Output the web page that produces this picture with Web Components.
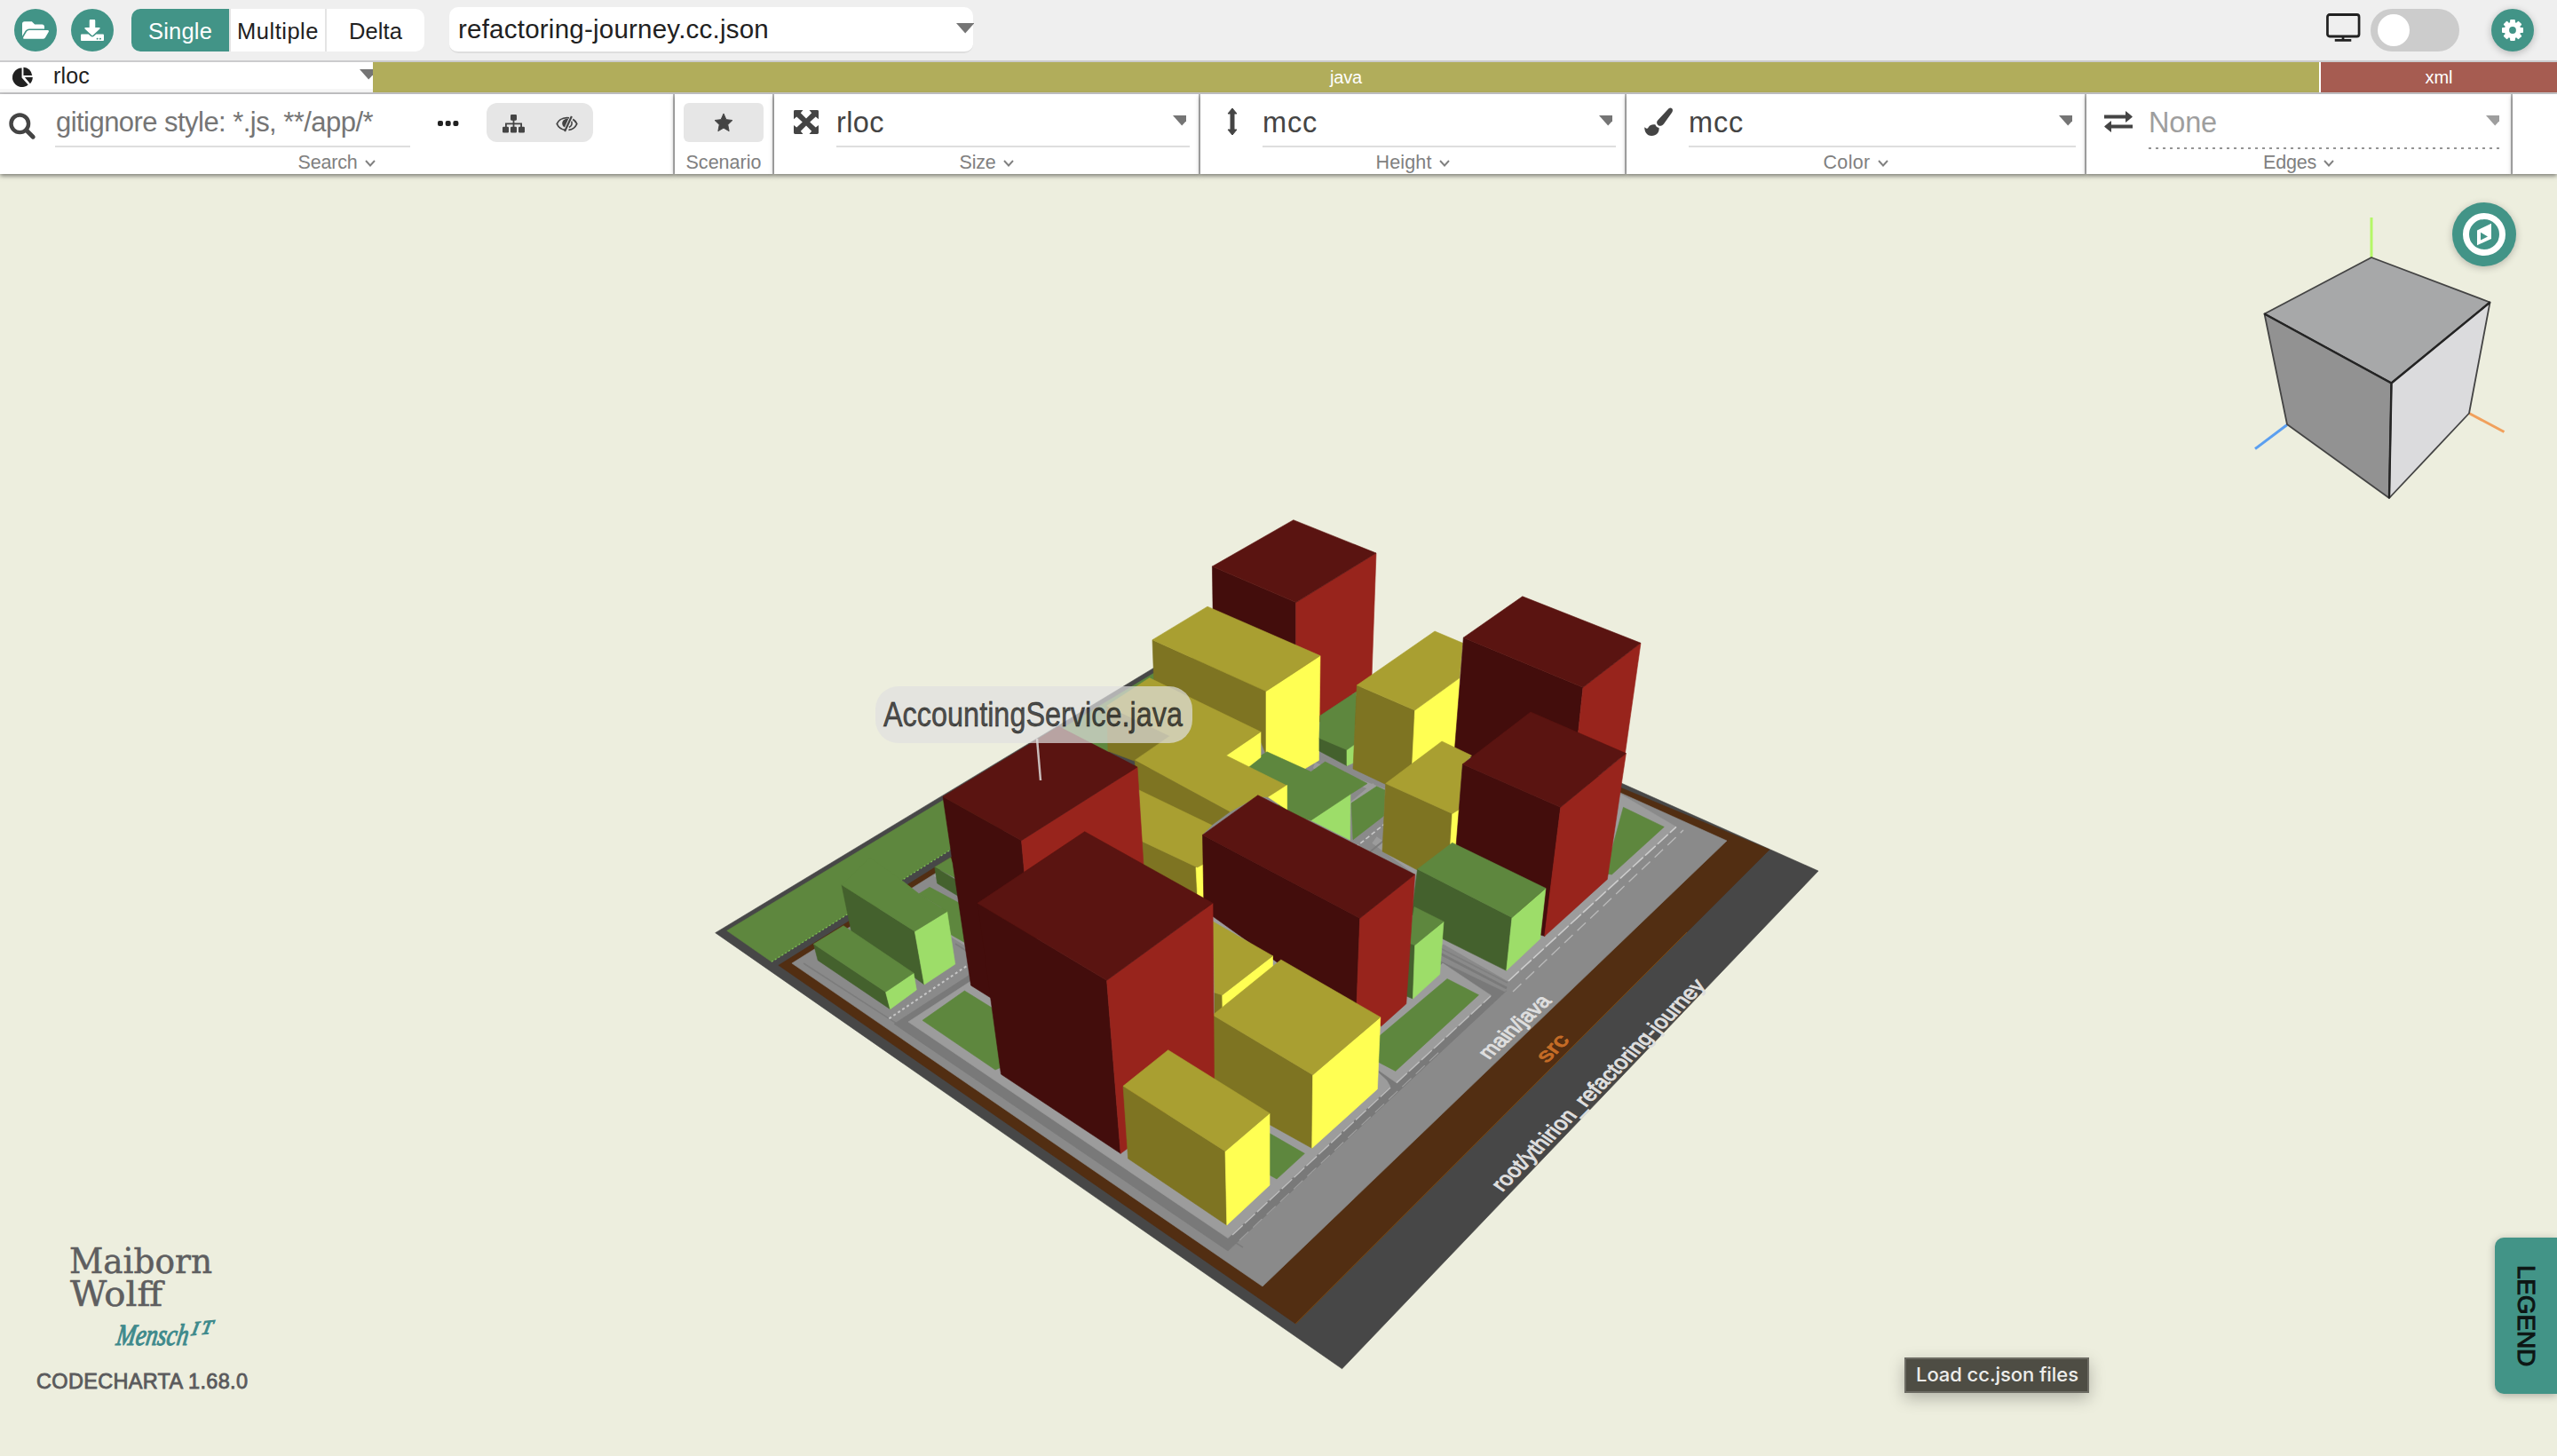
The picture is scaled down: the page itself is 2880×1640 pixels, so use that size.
<!DOCTYPE html>
<html lang="en">
<head>
<meta charset="utf-8">
<title>CodeCharta</title>
<style>
html,body{margin:0;width:2880px;height:1640px;overflow:hidden;background:#edeede;font-family:"Liberation Sans",Arial,sans-serif;color:#212121}
</style>
</head>
<body>
<cc-app></cc-app>
<script>
const define=(name,html,after)=>customElements.define(name,class extends HTMLElement{
  connectedCallback(){
    if(this.shadowRoot)return;
    const root=this.attachShadow({mode:'open'});
    root.innerHTML=typeof html==='function'?html(this):html;
    if(after)after(this,root);
  }
});

/* Text run whose tracking is set so that it spans the given advance width. */
define('cc-label','<style>:host{display:inline-block;white-space:pre}</style><slot></slot>',el=>{
  const w=+el.getAttribute('span');
  if(!w)return;
  el.style.letterSpacing='0px';
  const r=document.createRange();r.selectNodeContents(el);
  el.style.letterSpacing=((w-r.getBoundingClientRect().width)/el.textContent.length).toFixed(3)+'px';
});

const gear=(()=>{let s='';for(let i=0;i<8;i++)s+=`<rect x="-2.9" y="-12" width="5.8" height="7" rx="1" transform="rotate(${i*45})"/>`;
  return `<g transform="translate(12 12)" fill="currentColor">${s}<circle r="6.6" fill="none" stroke="currentColor" stroke-width="5.4"/></g>`})();
const ICONS={
  folder:['0 0 576 512','<path fill="currentColor" d="M572.7 292.1L500.3 416.2A64 64 0 0 1 445 448H45c-18.5 0-30-20.100-20.700-36.100l72.400-124.150A64 64 0 0 1 152 256h400c18.500 0 30 20.100 20.700 36.100zM152 224h328v-48c0-26.500-21.500-48-48-48H272l-64-64H48C21.500 64 0 85.500 0 112v278l69-118.400C86.200 242.200 118 224 152 224z"/>'],
  download:['0 0 512 512','<path fill="currentColor" d="M216 0h80c13.300 0 24 10.700 24 24v168h87.700c17.800 0 26.700 21.500 14.100 34.100L269.700 378.300c-7.500 7.500-19.800 7.500-27.300 0L90.100 226.100c-12.600-12.600-3.700-34.100 14.100-34.100H192V24c0-13.300 10.700-24 24-24zm296 376v112c0 13.300-10.700 24-24 24H24c-13.300 0-24-10.700-24-24V376c0-13.300 10.700-24 24-24h146.700l49 49c20.100 20.100 52.500 20.100 72.600 0l49-49H488c13.300 0 24 10.700 24 24zm-124 88c0-11-9-20-20-20s-20 9-20 20 9 20 20 20 20-9 20-20zm64 0c0-11-9-20-20-20s-20 9-20 20 9 20 20 20 20-9 20-20z"/>'],
  gear:['0 0 24 24',gear],
  monitor:['0 0 40 32','<rect x="1.500" y="1.500" width="36.500" height="24.500" rx="2.500" fill="none" stroke="currentColor" stroke-width="2.800"/><path d="M19.500 27v4M10 30.300h19" stroke="currentColor" stroke-width="2.800" fill="none"/>'],
  pie:['0 0 24 24','<path fill="currentColor" d="M11 1.500V13l7.500 8.500A11.300 11.300 0 1 1 11 1.500z"/><path fill="currentColor" d="M13 .8A10.800 10.800 0 0 1 23.200 10.500H13z"/><path fill="currentColor" d="M14.500 12.500H23.800c0 3-1.200 5.800-3 7.500z"/>'],
  search:['0 0 30 30','<circle cx="12.300" cy="12.300" r="9.800" fill="none" stroke="currentColor" stroke-width="4.400"/><path d="M19.500 19.500l7.700 7.700" stroke="currentColor" stroke-width="5" stroke-linecap="round"/>'],
  dots:['0 0 24 6','<g fill="currentColor"><rect width="6" height="6" rx="2"/><rect x="8.700" width="6" height="6" rx="2"/><rect x="17.400" width="6" height="6" rx="2"/></g>'],
  sitemap:['0 0 25 22','<g fill="currentColor"><rect x="9" width="7" height="7" rx="1.200"/><rect y="14.500" width="7" height="7" rx="1.200"/><rect x="9" y="14.500" width="7" height="7" rx="1.200"/><rect x="18" y="14.500" width="7" height="7" rx="1.200"/><path d="M11.600 6h1.800v4H22v5h-1.800v-3.200h-6.800V15h-1.800v-3.200H4.800V15H3v-5h8.600z"/></g>'],
  eyeslash:['0 0 26 20','<path d="M11 17.200C5.500 16.500 2.400 12.500 1.300 10 2.600 7 6.500 2.800 13 2.800c1 0 1.800.1 2.600.3" fill="none" stroke="currentColor" stroke-width="1.900"/><path d="M20 4.600c2.600 1.600 4 3.800 4.700 5.400-1.300 3-4.700 6.700-9.700 7.200" fill="none" stroke="currentColor" stroke-width="1.900"/><path d="M18.600 1L10.500 19" stroke="currentColor" stroke-width="2.200"/><path d="M14.700 4.200c-4-.8-7.200 2-7.200 5.300 0 2.300 1.200 3.800 2.800 4.700z" fill="currentColor"/><path d="M18.500 7c.8 2.800-.2 5.800-3 7.200" fill="none" stroke="currentColor" stroke-width="1.600"/>'],
  star:['0 0 24 23','<path fill="currentColor" stroke="currentColor" stroke-linejoin="round" d="M12 1l3.200 7 7.600.9-5.600 5.200 1.500 7.500L12 17.900l-6.700 3.700 1.500-7.500L1.200 8.900 8.800 8z"/>'],
  expand:['0 0 28 28','<g fill="currentColor"><path d="M1.500 0H10.500L7.800 3.300 14 9.800 20.200 3.300 17.500 0H26.500Q28 0 28 1.500V10.500L24.700 7.800 18.200 14 24.700 20.200 28 17.500V26.500Q28 28 26.500 28H17.500L20.200 24.700 14 18.200 7.800 24.700 10.500 28H1.500Q0 28 0 26.500V17.500L3.300 20.200 9.800 14 3.300 7.800 0 10.500V1.500Q0 0 1.500 0z"/></g>'],
  updown:['0 0 12 32','<path fill="currentColor" stroke="currentColor" stroke-linejoin="round" d="M6 1l5 6H8v18h3l-5 6-5-6h3V7H1z"/>'],
  brush:['0 0 32 32','<path fill="currentColor" d="M31 1c1.300 1.200 1.200 2.800.3 4.400L22 18.500c-1.500 2-3.400 2.600-5.300 2.200-1.600-.5-2.500-2-2.600-3.600 0-1.200.5-2.200 1.500-3.200L27.500 1.300C28.600.2 30 .1 31 1z"/><path fill="currentColor" d="M12.300 19.300c.7 2 2 3.200 4.300 3.600.4 5.500-3 9-8.300 9-5.500 0-8-4.400-8.100-9.700 1 .8 2.200 1.600 3 1.500.9-.1 1.200-1 1.700-1.800 1.600-2.400 4-3.100 7.400-2.600z"/>'],
  swap:['0 0 32 24','<path fill="currentColor" d="M0 4.500h24V.6q0-.8.8-.2L31.500 6q.6.500 0 1L24.800 12.500q-.8.500-.8-.3V8.500H0zM32 19.500H8v3.900q0 .8-.8.200L.5 18q-.6-.5 0-1L7.200 11.500q.8-.5.8.3v3.700h24z"/>'],
  chevron:['0 0 12 8','<path d="M1 1l5 5.500L11 1" fill="none" stroke="currentColor" stroke-width="1.900"/>'],
  compass:['0 0 48 48','<circle cx="24" cy="24" r="20.500" fill="none" stroke="currentColor" stroke-width="7"/><path fill-rule="evenodd" fill="currentColor" d="M32 11.700V29L16 36.300V19.500zM20 21.800v8.800l8-4.200z"/>']
};
define('cc-icon',el=>{
  const [vb,body]=ICONS[el.getAttribute('name')],w=el.getAttribute('w'),h=el.getAttribute('h');
  return `<style>:host{display:block;flex:none;width:${w}px;height:${h}px}svg{display:block;width:100%;height:100%;overflow:visible}</style><svg viewBox="${vb}" preserveAspectRatio="none">${body}</svg>`;
});

define('cc-round-button',`<style>:host{display:flex;flex:none;box-sizing:border-box;width:48px;height:48px;border-radius:50%;background:#429487;color:#fff;align-items:center;justify-content:center}:host([raised]){box-shadow:0 2px 8px rgba(0,0,0,.24)}:host([large]){width:72px;height:72px}</style><slot></slot>`);

define('cc-arrow',el=>`<style>:host{display:block;flex:none;width:${el.getAttribute('clip')||20}px;height:12px;overflow:hidden;color:#757575}svg{display:block}</style><svg width="21" height="12"><path d="M0 0h20.500L10.200 11.500z" fill="currentColor"/></svg>`);

define('cc-toolbar',`<style>
:host{display:flex;box-sizing:border-box;height:70px;padding:8px 26px 0 16px;background:#efefef;border-bottom:2px solid #cbcbcd}
cc-round-button{margin:2px 16px 0 0}
.modes{display:flex;margin:2px 28px 0 4px;height:48px;width:330px;border-radius:10px;overflow:hidden;background:#fff;font-size:25.500px;line-height:51px;text-align:center}
.modes div{width:106px;border-left:2px solid #e4e4e4}
.modes .on{width:110px;border:0;background:#429487;color:#fff}
.modes .last{width:110px}
.file{display:flex;box-sizing:border-box;width:590px;height:52px;border-radius:10px;background:#fff;border-bottom:2px solid #dedede;padding-left:10px;font-size:29.500px;line-height:49px}
.file cc-arrow{margin:18px -1px 0 0}
.sp{flex:1}
.mon{margin:7px 11px 0 0}
.sw{width:100px;height:48px;border-radius:24px;background:#ccc;margin:2px 36px 0 0;display:flex}
.sw i{display:block;width:36px;height:36px;border-radius:50%;background:#fff;margin:6px 0 0 8px}
.set{margin-right:0}
</style>
<cc-round-button><cc-icon name="folder" w="30" h="26"></cc-icon></cc-round-button>
<cc-round-button><cc-icon name="download" w="26" h="24"></cc-icon></cc-round-button>
<div class="modes"><div class="on"><cc-label span="72">Single</cc-label></div><div><cc-label span="92">Multiple</cc-label></div><div class="last"><cc-label span="60">Delta</cc-label></div></div>
<div class="file"><cc-label span="350">refactoring-journey.cc.json</cc-label><div class="sp"></div><cc-arrow></cc-arrow></div>
<div class="sp"></div>
<cc-icon class="mon" name="monitor" w="39" h="32"></cc-icon>
<div class="sw"><i></i></div>
<cc-round-button class="set" raised><cc-icon name="gear" w="24" h="24"></cc-icon></cc-round-button>`);

define('cc-metric-bar',`<style>
:host{display:flex;box-sizing:border-box;height:36px;border-bottom:2px solid #cbcbcd;background:#fff}
.m{display:flex;width:420px;box-sizing:border-box;height:30px;padding-left:13px;font-size:25px;line-height:30px}
.m cc-icon{margin:5px 23px 0 1px}
.m .sp{flex:1}
.m cc-arrow{margin-top:8px}
.b{height:34px;line-height:34px;font-size:20px;text-align:center;color:#fff;box-sizing:border-box}
.java{width:2192px;background:#b1ad5b}
.xml{width:266px;margin-left:2px;background:#a65c51}
.lt{display:flex;flex-direction:column;background:linear-gradient(#fff 30px,#f7f7f7 30px)}
</style>
<div class="lt"><div class="m"><cc-icon name="pie" w="23" h="23"></cc-icon><cc-label span="41">rloc</cc-label><div class="sp"></div><cc-arrow clip="15"></cc-arrow></div></div>
<div class="b java"><cc-label span="36">java</cc-label></div><div class="b xml"><cc-label span="31">xml</cc-label></div>`);

define('cc-panel',el=>`<style>
:host{display:flex;flex-direction:column;flex:none;box-sizing:border-box;width:${el.getAttribute('w')}px;height:90px;background:#fff;border-right:2px solid #bdbdbd;box-shadow:0 2px 5px rgba(0,0,0,.5)}
.body{display:flex;height:60px;flex:none}
.foot{display:flex;height:30px;justify-content:center;font-size:21.500px;line-height:34px;color:#808080}
.foot cc-icon{margin:14px 0 0 8px}
</style>
<div class="body"><slot></slot></div>
<div class="foot"><cc-label span="${el.getAttribute('ls')}">${el.getAttribute('label')}</cc-label>${el.hasAttribute('plain')?'':'<cc-icon name="chevron" w="12" h="8"></cc-icon>'}</div>`);

define('cc-field',el=>`<style>
:host{display:flex;flex:1;color:#444}
.ic{display:flex;width:72px;height:60px;align-items:center;justify-content:center;margin-right:-2px;padding-top:1px}
.val{display:flex;flex:1;box-sizing:border-box;height:60px;border-bottom:2px solid #dedede;margin-right:10px;font-size:32.500px;line-height:64px}
:host([off]) .val{border:0;height:62px;color:#9e9e9e;background:repeating-linear-gradient(90deg,#949494 0 2.700px,transparent 2.700px 8px) 0 100%/100% 2px no-repeat;margin-right:12px}
:host([off]) cc-arrow{color:#9e9e9e;margin-right:1px}
.sp{flex:1}
cc-arrow{margin:24px 4px 0 0}
</style><div class="ic"><cc-icon name="${el.getAttribute('icon')}" w="${el.getAttribute('iw')}" h="${el.getAttribute('ih')}"></cc-icon></div>
<div class="val"><cc-label span="${el.getAttribute('vs')}">${el.getAttribute('value')}</cc-label><div class="sp"></div><cc-arrow clip="15"></cc-arrow></div>`);

define('cc-ribbon',`<style>
:host{display:flex;height:90px;position:relative}
.s{margin:21px 0 0 10px}
.q{box-sizing:border-box;width:400px;height:60px;margin-left:22px;border-bottom:2px solid #dedede;font-size:31px;line-height:64px;color:#757575}
.q cc-label{margin-left:1px}
.d{margin:30px 32px 0 31px}
.g{display:flex;width:120px;height:44px;margin:10px 0 0 -1px;border-radius:12px;background:#e6e6e6;color:#444}
.g cc-icon:first-child{margin:13px 0 0 18px}
.g cc-icon:last-child{margin:14px 0 0 35px}
.star{display:flex;width:90px;height:44px;margin:10px;border-radius:6px;background:#e6e6e6;color:#444;align-items:center;justify-content:center}
.rest{flex:1;background:#fff;box-shadow:0 2px 5px rgba(0,0,0,.5)}
</style>
<cc-panel w="760" label="Search" ls="67"><cc-icon class="s" name="search" w="30" h="30" style="color:#444"></cc-icon><div class="q"><cc-label span="357">gitignore style: *.js, **/app/*</cc-label></div><cc-icon class="d" name="dots" w="24" h="6"></cc-icon><div class="g"><cc-icon name="sitemap" w="25" h="21"></cc-icon><cc-icon name="eyeslash" w="25" h="19"></cc-icon></div></cc-panel>
<cc-panel w="112" label="Scenario" ls="85" plain><div class="star"><cc-icon name="star" w="22" h="22"></cc-icon></div></cc-panel>
<cc-panel w="480" label="Size" ls="41"><cc-field icon="expand" iw="28" ih="27" value="rloc" vs="54"></cc-field></cc-panel>
<cc-panel w="480" label="Height" ls="63"><cc-field icon="updown" iw="12" ih="32" value="mcc" vs="62"></cc-field></cc-panel>
<cc-panel w="518" label="Color" ls="53"><cc-field icon="brush" iw="32" ih="32" value="mcc" vs="62"></cc-field></cc-panel>
<cc-panel w="480" label="Edges" ls="60"><cc-field off icon="swap" iw="32" ih="24" value="None" vs="77"></cc-field></cc-panel>
<div class="rest"></div>`);

/* City map. Each block lists its roof, shaded wall and lit wall. */
const C={r:['#5a1411','#430d0c','#98241c'],y:['#a99f31','#7e7422','#ffff53'],g:['#5e873e','#44612d','#9ddd69']};
const BLOCKS=[
['r','1456.800,585.700 1550,623 1459.700,678.600 1365.400,638','1365.400,638 1459.700,678.600 1459.700,745 1366.300,700','1459.700,678.600 1550,623 1545,762 1528,779 1487,806 1459.700,800'],
['y','1360,683.200 1487,738.600 1426,778.600 1298,720.700','1298,720.700 1426,778.600 1426,850 1418,830 1300,775','1426,778.600 1487,738.600 1485.400,856.400 1469.400,866 1426,850'],
['g','1487,806 1528,779 1525.400,838.600 1517,844.600 1486,831.400','1486,831 1517,844.600 1517,862.500 1486,846','1517,844.600 1525.400,838.600 1525,859 1517,862.500'],
['g','1550.600,885.700 1560,890 1558.600,919 1524,945.700 1522,904.600','',''],
['g','1427,846.800 1476.600,869.300 1492.500,858 1540,882.500 1521,894.600 1476.600,924 1440,915 1440,885 1400,864','','1476.600,924 1521,893.500 1520.500,946'],
['y','1294.700,763.600 1420,824.300 1381,851 1449.600,885 1428.600,898 1416.800,897 1385,914.600 1278,856.400 1317.800,829 1246.600,795','1246.600,795 1317.800,829 1277.400,857 1248,846','1381,851 1420,824.300 1420,853 1406,864'],
['y','','1278,856.400 1385,914.600 1364,930 1283,891','1428.600,898 1449.600,884.500 1449.600,912'],
['y','1283,890 1365,929.600 1354.500,940 1356,973 1348.600,977 1286,947.500','1286,947.500 1348.600,977 1349.400,1009 1288,976','1347,977 1356,972 1356,1012 1348.600,1008'],
['y','1616,711 1647.400,724.300 1644,763.600 1593.600,800 1528.300,771.800','1528.300,771.800 1593.600,800 1590.600,860 1562,884 1524,866','1593.600,800 1644,763.600 1640,845 1623,837 1590.600,860'],
['r','1714.800,671.800 1848,724.300 1783,774.300 1648.300,718.200','1648.300,718.200 1783,774.300 1777.500,826 1700,862 1657,853 1638.600,842','1783,774.300 1848,724.300 1829.500,855 1777.500,826'],
['y','1624,835 1657.500,851 1647,862 1643,912 1635.700,916.400 1560.700,882.500','1560.700,882.500 1635.700,916.400 1633.600,951 1596.500,980 1557,959','1635.700,916.400 1644,911 1641,954 1633.600,951'],
['r','1724,802 1831.400,848.600 1757.700,909.300 1647.400,860.700','1647.400,860.700 1757.700,909.300 1740,1054.500 1735,1053 1640,953','1757.700,909.300 1831.400,848.600 1810.300,990.400 1739.600,1054.600'],
['g','1635.700,949.300 1741,1000.500 1703,1033.500 1596.500,979','1596.500,979 1703,1033.500 1696.700,1093.300 1625,1057.500 1590,1030','1703,1033.500 1741,1000.500 1734.600,1057.500 1696.700,1093.300'],
['g','1593,1021.500 1626,1038 1593.600,1064.600 1586,1062','1586,1062 1593.600,1064.600 1591.400,1125 1584,1122','1593.600,1064.600 1626,1038 1621.700,1097.300 1591.400,1125'],
['r','1416.800,895.700 1593.600,985 1531.700,1034.300 1354.500,940.400','1354.500,940.400 1531.700,1034.300 1528,1132 1440,1085 1356,1025','1531.700,1034.300 1593.600,985 1583.800,1130.700 1555.600,1156 1528,1132'],
['y','1366,1038 1433.500,1076.700 1376.700,1120.700 1368,1118','1368,1118 1376.700,1120.700 1377,1137 1368,1142','1376.700,1120.700 1433.500,1076.700 1433.500,1092 1377,1137'],
['y','1442.800,1081 1554.800,1145.700 1478.600,1210.700 1366,1143.300','1366,1143.300 1478.600,1210.700 1477.700,1293.300 1430,1266.700 1367,1215','1478.600,1210.700 1554.800,1145.700 1551.400,1226.700 1477.700,1293.300'],
['r','1192.400,818.300 1281,864 1150.500,946.700 1062,897.300','1062,897.300 1150.500,946.700 1154,985 1180,1124 1116,1124 1093.600,1110','1150.500,946.700 1281,864 1288,975 1221,1000 1154,985'],
['r','1221.700,936.700 1366,1017.300 1246.600,1104.300 1101,1017.300','1101,1017.300 1246.600,1104.300 1262.200,1299.300 1127.500,1210','1246.600,1104.300 1366,1017.300 1367.500,1217 1330,1240 1269.400,1294 1262.200,1299.300'],
['y','1315.700,1182.700 1430,1254 1380,1296.700 1265,1223.300','1265,1223.300 1380,1296.700 1381.800,1380 1270.600,1305','1380,1296.700 1430,1254 1430,1335 1381.800,1380'],
['g','980,966 948,996.700 1030.300,1049 1066.700,1026.700 1035,1006.700 1014.500,990.700','948,996.700 1030.300,1049 1041,1109 959,1050','1030.300,1049 1066.700,1026.700 1075.800,1086 1041,1109'],
['g','950,1042.700 1029,1096 997.500,1117.300 916.400,1063.300','916.400,1063.300 997.500,1117.300 1002.600,1136.700 921.200,1081.700','997.500,1117.300 1029,1096 1032.300,1115 1002.600,1136.700']
];
const poly=(p,f)=>p?`<polygon points="${p}" fill="${f}" stroke="${f}" stroke-width=".6"/>`:'';
const ln=(x1,y1,x2,y2,c,w,d)=>`<line x1="${x1}" y1="${y1}" x2="${x2}" y2="${y2}" stroke="${c}" stroke-width="${w}"${d?` stroke-dasharray="${d}"`:''}/>`;
define('cc-city-map',()=>{
  let s='';
  s+=poly('805.700,1050.700 1299,752.700 1400,725 1540,790 1660,830 1827,882.500 2048,981 1511.600,1541.800','#474747');
  s+=poly('818.700,1048.300 1300,758 1300,815 1070.600,956.700 869,1083.300','#5e873e');
  s+=ln(869,1083.300,1072,956.300,'#7fbd56',1.300,'2 2.500');
  s+=poly('876.900,1087.300 1200,885 1500,800 1825,887 1993,957 1459.300,1491','#522e12');
  s+=ln(1459.300,1491,1900,1050,'#7a4a14',1);
  s+=poly('891.900,1085 1200,892 1500,810 1825,893 1945,947 1422,1449','#8a8a8a');
  s+=ln(905,1085,1400,1405,'#7c7c7c',1.500);
  s+=poly('1007,1153.300 1120,1080 1400,1000 1640,1075 1696.700,1116 1383,1409','#797979');
  s+=poly('1023,1151 1112,1093 1400,1010 1553,1200 1565.800,1224 1383,1394.600','#9c9c9c');
  s+=poly('1553,1208 1566,1220 1573,1215 1553,1200','#797979');
  s+=poly('1554,1150 1625,1085 1679.700,1121.400 1572.700,1219.600 1552,1205','#9c9c9c');
  s+=poly('1620,1062 1640,900 1826,895 1888,931.400 1699,1105.400','#9c9c9c');
  s+=poly('1618,1066 1626,1064 1702,1108 1695,1117 1618,1080','#8a8a8a');
  s+=ln(1622,1074,1697,1113,'#7a7a7a',3);
  s+=ln(1622,1068,1698,1107,'#7f7f7f',1.500);
  s+=poly('1400,840 1480,850 1570,880 1600,985 1540,965 1380,1000','#8a8a8a');
  s+=ln(1480,862,1570,896,'#9c9c9c',7)+ln(1548,946,1600,984,'#9c9c9c',9)+ln(1522,906,1548,884,'#9c9c9c',5);
  s+=ln(1526,955,1562,926,'#c8c8c8',1.600,'5 3')+ln(1540,962,1562,944,'#7c7c7c',2);
  s+=ln(1001.400,1147.300,1088.400,1088.300,'#c6c6c6',2,'3 3');
  s+=ln(1071,1053,1092,1066,'#9c9c9c',4)+ln(1076,1063,1090,1072,'#7c7c7c',1.500)+ln(1053,985,1082,1004,'#9c9c9c',4);
  s+=ln(1388,1391,1566,1225,'#bcbcbc',1.500,'16 3')+ln(1573,1219.600,1679,1122,'#bcbcbc',1.500,'16 3')+ln(1699,1105,1888,931.400,'#cccccc',1.600,'16 3');
  s+=ln(1396,1397,1624,1182,'#9e9e9e',1.200,'14 7')+ln(1704,1117,1896,935,'#b8b8b8',1.400,'13 7');
  s+=poly('1039,1149.300 1086.400,1116 1117,1135 1128,1202 1121,1205','#5e873e');
  s+=poly('1630,1102.500 1665.500,1120.700 1571.800,1206.400 1550,1195 1550,1170','#5e873e');
  s+=poly('1429,1276 1469.400,1299.300 1438,1328 1429,1323','#5e873e');
  s+=poly('1828.400,909.300 1874.300,931.400 1815.400,985 1808,984','#5e873e');
  s+=poly('1047,999.300 1082,1018 1089,1063 1071.400,1053 1060,1022 1035,1006.700','#5e873e');
  s+=poly('1052.800,976.700 1070.600,966 1080,991','#5e873e')+poly('1052.800,976.700 1080,993 1082,1011 1055.600,995','#44612d');
  for(const [c,t,d,l] of BLOCKS)s+=poly(d,C[c][1])+poly(l,C[c][2])+poly(t,C[c][0]);
  const F='font-family="Liberation Sans" ';
  s+=`<g ${F} stroke-width="1.100"><text transform="matrix(.735 -.678 .82 .54 1677 1194)" font-size="25" fill="#dedede" stroke="#dedede" textLength="97" lengthAdjust="spacingAndGlyphs">main/java</text>
  <text transform="matrix(.715 -.7 .82 .54 1742 1198)" font-size="25" fill="#c56c26" stroke="#c56c26" textLength="37" lengthAdjust="spacingAndGlyphs">src</text>
  <text transform="matrix(.703 -.711 .82 .56 1692 1343)" font-size="25" fill="#dedede" stroke="#dedede" textLength="327" lengthAdjust="spacingAndGlyphs">root/ythirion_refactoring-journey</text></g>`;
  s+=ln(1168,832,1172,879,'#c9bcba',2.500);
  s+=`<rect x="986" y="773" width="357" height="64" rx="26" fill="#e0e0e0" fill-opacity=".7"/><text ${F} x="995" y="818" font-size="39" fill="#000" fill-opacity=".68" stroke="#000" stroke-opacity=".55" stroke-width=".8" textLength="337" lengthAdjust="spacingAndGlyphs">AccountingService.java</text>`;
  return `<style>:host{display:block;width:2880px;height:1444px}svg{display:block}</style><svg width="2880" height="1444" viewBox="0 196 2880 1444">${s}</svg>`;
});

define('cc-view-cube',`<style>:host{display:block;width:300px;height:340px}svg{display:block}</style>
<svg width="300" height="340" viewBox="2530 235 300 340"><path d="M2671 245v45" stroke="#b4f768" stroke-width="3"/><path d="M2540 505.500l36-27" stroke="#5b9ff0" stroke-width="3"/><path d="M2781 465.500l39.500 21" stroke="#f1a05c" stroke-width="3"/>
<g stroke="#444" stroke-width="1.800" stroke-linejoin="round"><path d="M2671 290l133.500 50.500-111 91-143-78z" fill="#a7a8a9"/><path d="M2550.500 353.500l143 78-2.500 129.500-115-83z" fill="#929292"/><path d="M2804.500 340.500l-111 91-2.500 129.500 90-95.500z" fill="#dbdbdd"/></g><path d="M2550.500 353.500l143 78 111-91M2693.500 431.500l-2.500 129.500" fill="none" stroke="#242424" stroke-width="2.400"/></svg>`);

define('cc-brand',`<style>:host{display:block}svg{display:block}</style>
<svg width="280" height="200" viewBox="30 1390 280 200"><text font-family="'DejaVu Serif Condensed','DejaVu Serif',serif" font-size="40" fill="#5e5e60" stroke="#5e5e60" stroke-width=".5"><tspan x="78" y="1434" textLength="161" lengthAdjust="spacingAndGlyphs">Maiborn</tspan><tspan x="79" y="1470.500" textLength="104" lengthAdjust="spacingAndGlyphs">Wolff</tspan></text>
<g font-family="Liberation Serif" font-style="italic" fill="#3f8a8c" stroke="#3f8a8c" stroke-width="1.200"><text transform="matrix(1 0 -.15 1 130 1515)" font-size="34" textLength="81" lengthAdjust="spacingAndGlyphs">Mensch</text><text transform="matrix(1 -.1 -.2 1 215 1504)" font-size="22" textLength="23">IT</text></g>
<text x="41" y="1564" font-family="Liberation Sans" font-size="23.500" fill="#5a5a5c" stroke="#5a5a5c" stroke-width=".8" textLength="238">CODECHARTA 1.68.0</text></svg>`);

define('cc-legend-tab',`<style>:host{display:flex;width:70px;height:176px;border-radius:10px 0 0 10px;background:#429487;box-shadow:0 2px 10px rgba(0,0,0,.28);align-items:center;justify-content:center;writing-mode:vertical-rl;font-size:28px;color:#0d1614;-webkit-text-stroke:1px #0d1614}span{letter-spacing:-.2px;line-height:70px}</style><span>LEGEND</span>`);

define('cc-tooltip',`<style>:host{display:block;box-sizing:border-box;width:208px;height:40px;border:2px solid #6c6b63;background:#4e4d44;box-shadow:0 6px 18px rgba(0,0,0,.25);color:#ececea;font:500 22px/35px Inter,sans-serif;padding-left:11px}</style><cc-label><slot></slot></cc-label>`,(el,root)=>{
  const l=root.querySelector('cc-label');
  const r=document.createRange();r.selectNodeContents(el);l.style.letterSpacing='0px';
  l.style.letterSpacing=((183-r.getBoundingClientRect().width)/el.textContent.length)+'px';
});

define('cc-app',`<style>
:host{display:flex;flex-direction:column;width:2880px;height:1640px;position:relative;overflow:hidden}
cc-ribbon{z-index:1}
cc-view-cube{position:absolute;left:2530px;top:235px}
.home{position:absolute;left:2762px;top:228px}
cc-brand{position:absolute;left:30px;top:1390px}
cc-legend-tab{position:absolute;right:0;top:1394px}
cc-tooltip{position:absolute;left:2145px;top:1529px}
</style>
<cc-toolbar></cc-toolbar><cc-metric-bar></cc-metric-bar><cc-ribbon></cc-ribbon><cc-city-map></cc-city-map>
<cc-view-cube></cc-view-cube><cc-round-button class="home" large raised><cc-icon name="compass" w="48" h="48"></cc-icon></cc-round-button>
<cc-brand></cc-brand><cc-legend-tab></cc-legend-tab><cc-tooltip>Load cc.json files</cc-tooltip>`);
</script>
</body>
</html>
